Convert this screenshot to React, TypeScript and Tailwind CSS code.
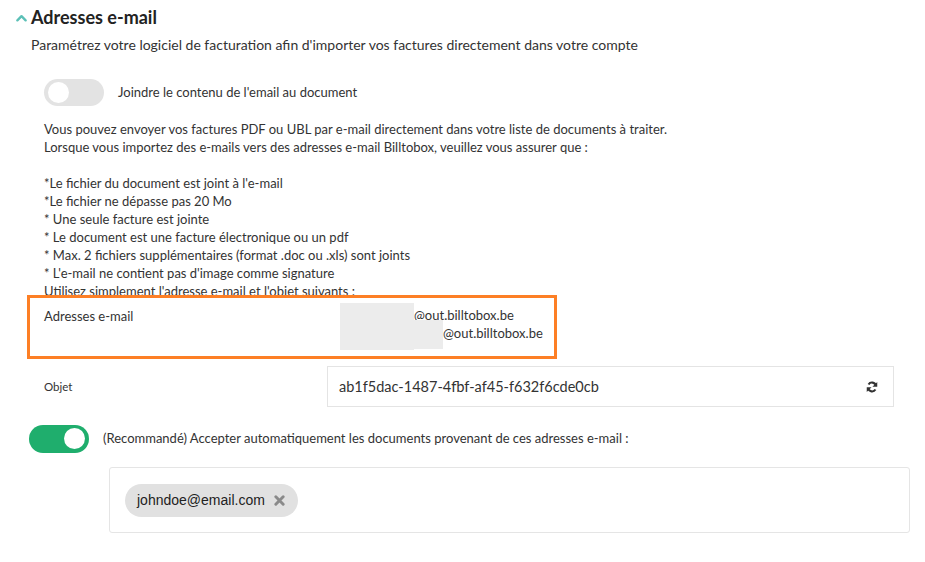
import React, { useState } from 'react';

const font = { fontFamily: 'Lato, "Open Sans", sans-serif' };

const Toggle: React.FC<{ on: boolean; onChange: () => void; className?: string }> = ({ on, onChange, className }) => (
    <button
        type="button"
        onClick={onChange}
        className={`relative w-[60px] h-[27px] rounded-full shrink-0 transition-colors ${on ? 'bg-[#1fae6d]' : 'bg-[#e3e3e3]'} ${className ?? ''}`}
    >
        <span className={`absolute top-[3px] w-[21px] h-[21px] rounded-full bg-white transition-all ${on ? 'left-[35px]' : 'left-[4px]'}`} />
    </button>
);

const App: React.FC = () => {
    const [joinContent, setJoinContent] = useState(false);
    const [autoAccept, setAutoAccept] = useState(true);

    return (
        <div style={font} className="w-[925px] h-[562px] bg-white text-[#333] relative overflow-hidden">
            {/* Header */}
            <div className="flex items-center pl-[16px] pt-[7px] h-[27px]">
                <svg viewBox="0 0 12 8" className="w-[11px] h-[8px] mr-[4px] mt-[1px]">
                    <path d="M1.5 6.5 L6 2 L10.5 6.5" fill="none" stroke="#5cc0b7" strokeWidth="2.6" strokeLinecap="round" strokeLinejoin="round" />
                </svg>
                <h2 className="text-[18px] font-bold text-[#222] leading-none">Adresses e-mail</h2>
            </div>
            <p className="pl-[31px] mt-[9px] text-[14px] leading-[18px] text-[#333]">
                Paramétrez votre logiciel de facturation afin d'importer vos factures directement dans votre compte
            </p>

            {/* Join toggle */}
            <div className="flex items-center pl-[44px] mt-[25px] gap-[14px]">
                <Toggle on={joinContent} onChange={() => setJoinContent(!joinContent)} />
                <span className="text-[13px]">Joindre le contenu de l'email au document</span>
            </div>

            {/* Instructions */}
            <div className="pl-[44px] mt-[14px] text-[13px] leading-[18px] text-[#333]">
                <p>Vous pouvez envoyer vos factures PDF ou UBL par e-mail directement dans votre liste de documents à traiter.</p>
                <p>Lorsque vous importez des e-mails vers des adresses e-mail Billtobox, veuillez vous assurer que :</p>
                <p className="h-[18px]" />
                <p>*Le fichier du document est joint à l'e-mail</p>
                <p>*Le fichier ne dépasse pas 20 Mo</p>
                <p>* Une seule facture est jointe</p>
                <p>* Le document est une facture électronique ou un pdf</p>
                <p>* Max. 2 fichiers supplémentaires (format .doc ou .xls) sont joints</p>
                <p>* L'e-mail ne contient pas d'image comme signature</p>
                <p className="h-[13px] overflow-visible">Utilisez simplement l'adresse e-mail et l'objet suivants :</p>
            </div>

            {/* Highlighted addresses */}
            <div className="relative ml-[27px] w-[530px] h-[64px] border-[3px] border-[#fd7f25] bg-white">
                <div className="flex pt-[9px] pl-[14px] text-[13px] leading-[18px]">
                    <span className="w-[296px]">Adresses e-mail</span>
                    <div className="relative">
                        <div className="flex">
                            <span className="w-[74px] h-[47px] bg-[#ececec] -mt-[4px]" />
                            <span className="-mt-[1px]">@out.billtobox.be</span>
                        </div>
                        <div className="absolute left-[58px] top-[14px] flex">
                            <span className="w-[45px] h-[29px] bg-[#ececec] -mt-[1px]" />
                            <span className="mt-[3px]">@out.billtobox.be</span>
                        </div>
                    </div>
                </div>
            </div>

            {/* Objet */}
            <div className="flex items-center mt-[7px] pl-[44px]">
                <span className="w-[283px] text-[11.5px] text-[#333]">Objet</span>
                <div className="w-[567px] h-[41px] border border-[#e4e4e4] flex items-center justify-between pl-[11px] pr-[15px]">
                    <span className="text-[14.5px] text-[#333]">ab1f5dac-1487-4fbf-af45-f632f6cde0cb</span>
                    <svg viewBox="0 0 16 16" className="w-[12px] h-[12px]">
                        <path d="M13.2 6.2A5.4 5.4 0 0 0 3.4 4.6" fill="none" stroke="#333" strokeWidth="2.8" />
                        <path d="M2.8 9.8a5.4 5.4 0 0 0 9.8 1.6" fill="none" stroke="#333" strokeWidth="2.8" />
                        <path d="M15 1.2v6.4h-6.4z" fill="#333" />
                        <path d="M1 14.8v-6.4h6.4z" fill="#333" />
                    </svg>
                </div>
            </div>

            {/* Auto accept */}
            <div className="flex items-center pl-[29px] mt-[18px] gap-[14px]">
                <Toggle on={autoAccept} onChange={() => setAutoAccept(!autoAccept)} className="h-[28px]" />
                <span className="text-[13px]">(Recommandé) Accepter automatiquement les documents provenant de ces adresses e-mail :</span>
            </div>

            {/* Tags */}
            <div className="ml-[109px] mt-[14px] w-[801px] h-[66px] border border-[#e5e5e5] rounded-[3px] flex items-center pl-[15px]">
                <div
                    className="flex items-center h-[33px] rounded-full bg-[#e1e1e1] pl-[12px] pr-[13px] gap-[9px]"
                    style={{ fontFamily: '"Liberation Sans", Arial, sans-serif' }}
                >
                    <span className="text-[14px] text-[#222]">johndoe@email.com</span>
                    <svg viewBox="0 0 12 12" className="w-[11px] h-[11px]">
                        <path d="M2 2L10 10M10 2L2 10" stroke="#8a8a8a" strokeWidth="3.2" strokeLinecap="round" />
                    </svg>
                </div>
            </div>
        </div>
    );
};

export default App;
